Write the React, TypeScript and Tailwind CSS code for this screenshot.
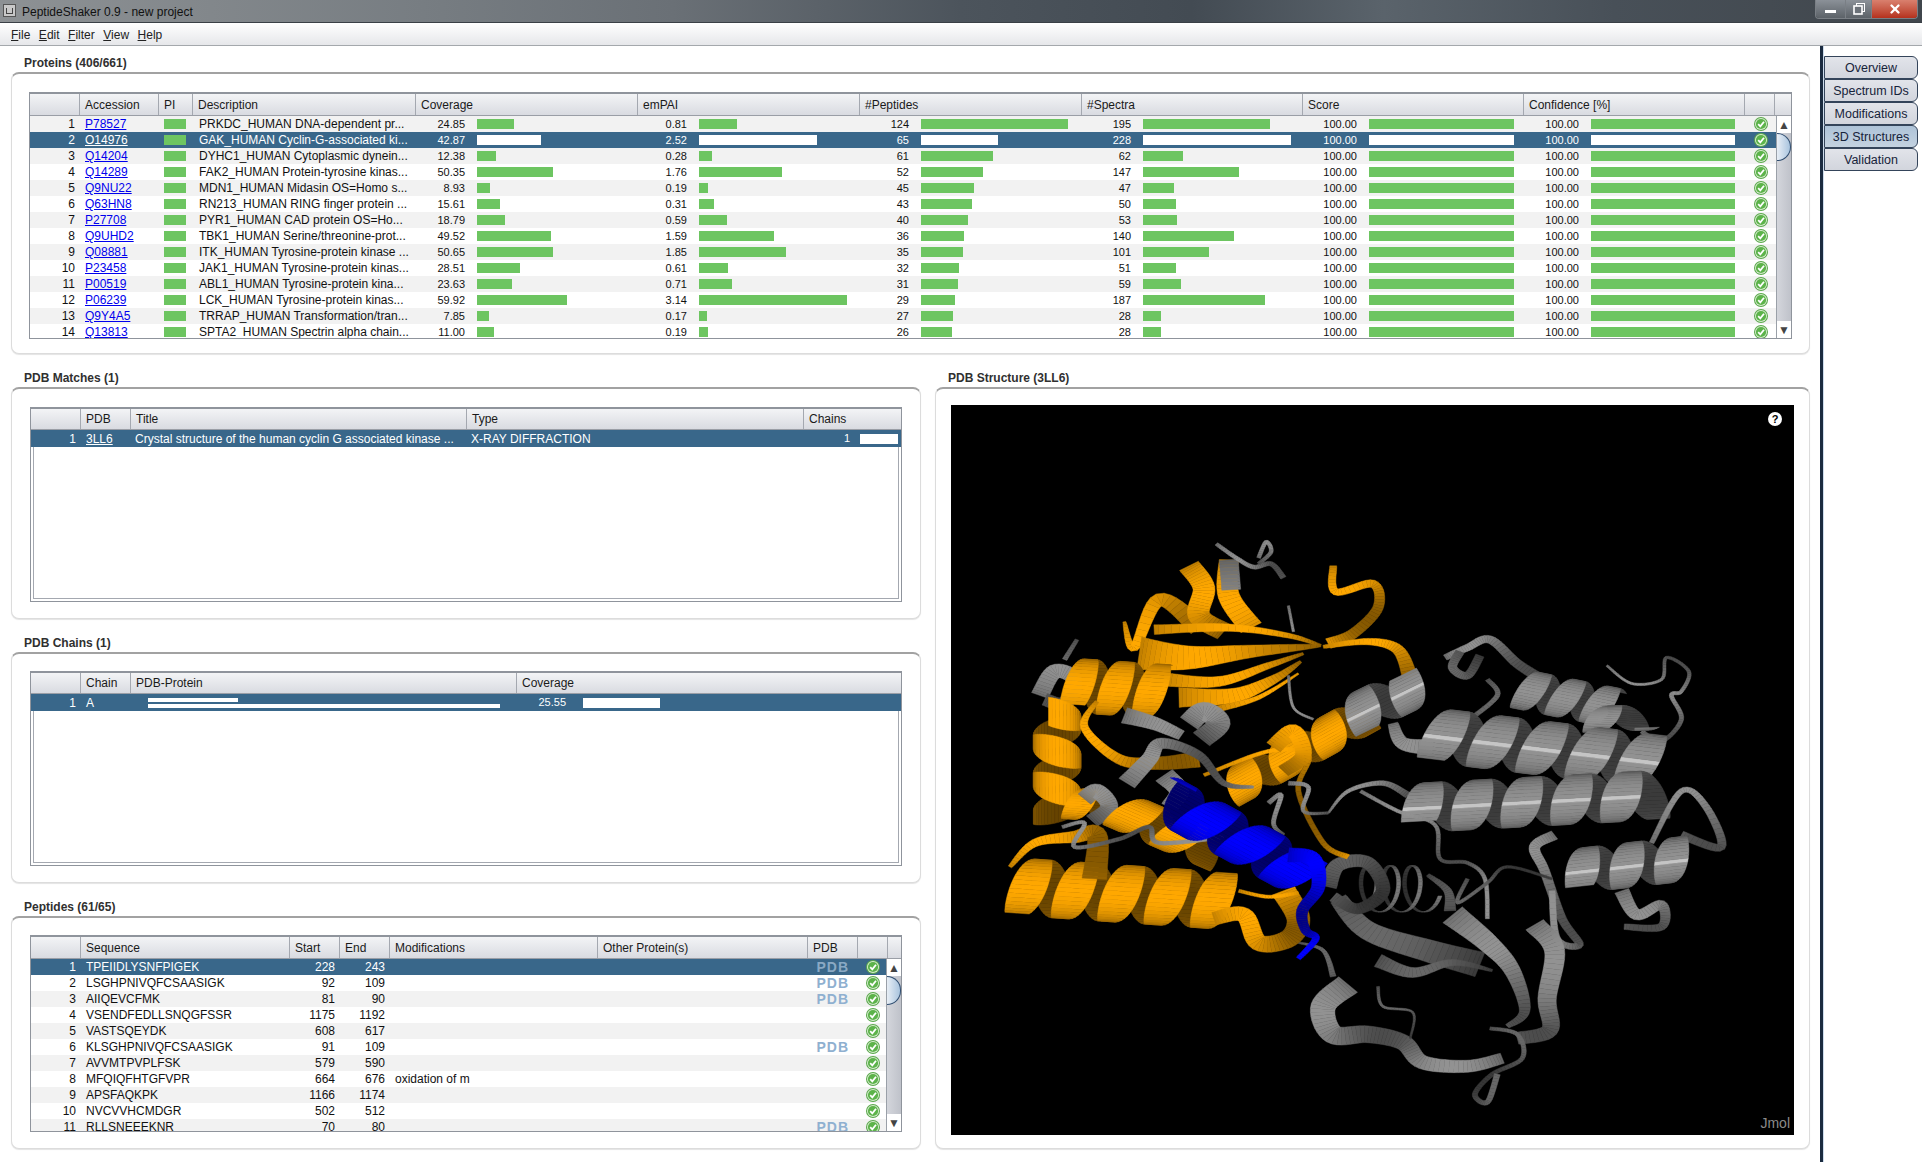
import { X } from "lucide-react";

type Rgb = [number, number, number];
type Poly = { p: string; f: string };

const ORANGE: Rgb = [255, 168, 0];
const GRAY: Rgb = [146, 146, 146];
const DARK: Rgb = [104, 104, 104];
const BLUE: Rgb = [0, 0, 255];

const tint = (c: Rgb, s: number) =>
  `rgb(${Math.min(255, Math.round(c[0] * s))},${Math.min(255, Math.round(c[1] * s))},${Math.min(255, Math.round(c[2] * s))})`;

// helical ribbon between two points, back half first so the front covers it.
// the band pinches at the turns, which gives the scalloped outline Jmol draws
function helix(ax: number, ay: number, bx: number, by: number, r: number, turns: number, w: number, base: Rgb, phase = 0, ell = 0): Poly[] {
  const len = Math.hypot(bx - ax, by - ay);
  const ux = (bx - ax) / len;
  const uy = (by - ay) / len;
  const nx = -uy;
  const ny = ux;
  const steps = Math.round(turns * 40);
  const back: Poly[] = [];
  const front: Poly[] = [];
  const at = (t: number) => {
    const th = Math.PI * 2 * turns * t + phase;
    const c = Math.cos(th) * r;
    const s = Math.sin(th) * ell;
    return [ax + (bx - ax) * t + nx * c + ux * s, ay + (by - ay) * t + ny * c + uy * s];
  };
  const half = (t: number) => {
    const th = Math.PI * 2 * turns * t + phase;
    return (w / 2) * (ell > 0 ? 1 : 0.45 + 0.55 * Math.abs(Math.sin(th)));
  };
  for (let i = 0; i < steps; i++) {
    const t0 = i / steps;
    const t1 = (i + 1) / steps;
    const a = at(t0);
    const b = at(t1);
    const h0 = half(t0);
    const h1 = half(t1);
    const th = Math.PI * 2 * turns * ((t0 + t1) / 2) + phase;
    const sn = Math.sin(th);
    const p = [
      [a[0] - ux * h0, a[1] - uy * h0],
      [b[0] - ux * h1, b[1] - uy * h1],
      [b[0] + ux * h1, b[1] + uy * h1],
      [a[0] + ux * h0, a[1] + uy * h0],
    ]
      .map((q) => q.map((v) => v.toFixed(1)).join(","))
      .join(" ");
    if (sn > 0) front.push({ p, f: tint(base, sn > 0.997 && base !== BLUE && base !== ORANGE ? 1.35 : 0.58 + 0.42 * sn) });
    else back.push({ p, f: tint(base, 0.54 + 0.14 * sn) });
  }
  return [...back, ...front];
}

// smooth band through a list of points, used for sheets and coils
function band(pts: number[][], w0: number, w1: number, base: Rgb, sheen = 0.14): Poly[] {
  const out: Poly[] = [];
  const sampled: number[][] = [];
  for (let i = 0; i < pts.length - 1; i++) {
    const p0 = pts[Math.max(0, i - 1)];
    const p1 = pts[i];
    const p2 = pts[i + 1];
    const p3 = pts[Math.min(pts.length - 1, i + 2)];
    for (let k = 0; k < 10; k++) {
      const t = k / 10;
      const f = (a: number, b: number, c: number, d: number) =>
        0.5 * (2 * b + (c - a) * t + (2 * a - 5 * b + 4 * c - d) * t * t + (3 * b - a - 3 * c + d) * t * t * t);
      sampled.push([f(p0[0], p1[0], p2[0], p3[0]), f(p0[1], p1[1], p2[1], p3[1])]);
    }
  }
  sampled.push(pts[pts.length - 1]);
  const edge = (i: number) => {
    const a = sampled[Math.max(0, i - 1)];
    const b = sampled[Math.min(sampled.length - 1, i + 1)];
    const l = Math.hypot(b[0] - a[0], b[1] - a[1]) || 1;
    const w = (w0 + (w1 - w0) * (i / (sampled.length - 1))) / 2;
    const nx = (-(b[1] - a[1]) / l) * w;
    const ny = ((b[0] - a[0]) / l) * w;
    const c = sampled[i];
    return [`${(c[0] + nx).toFixed(1)},${(c[1] + ny).toFixed(1)}`, `${(c[0] - nx).toFixed(1)},${(c[1] - ny).toFixed(1)}`];
  };
  for (let i = 0; i < sampled.length - 1; i++) {
    const e0 = edge(i);
    const e1 = edge(i + 1);
    const s = 0.76 + 0.24 * Math.sin(i * sheen);
    out.push({ p: `${e0[0]} ${e1[0]} ${e1[1]} ${e0[1]}`, f: tint(base, s) });
  }
  return out;
}

const ribbons: Poly[] = [
  // grey domain, far side
  ...band([[915, 345], [960, 320], [1005, 300], [1060, 360], [1110, 400]], 14, 24, GRAY),
  ...band([[1000, 400], [1020, 440], [965, 500]], 10, 10, DARK),
  ...band([[945, 330], [930, 370], [960, 390], [985, 340]], 18, 18, DARK),
  ...helix(1070, 425, 1250, 470, 50, 2.6, 54, GRAY),
  ...band([[1240, 365], [1290, 410], [1350, 400], [1360, 345], [1405, 380], [1390, 430], [1370, 440], [1390, 500], [1350, 555], [1310, 530]], 5, 10, GRAY),
  ...helix(1205, 500, 1320, 495, 32, 1.1, 64, GRAY),
  ...band([[810, 510], [830, 560], [890, 570]], 20, 40, GRAY),
  ...helix(895, 540, 1330, 605, 68, 4.4, 78, GRAY, 0.5),
  ...band([[680, 735], [720, 680], [790, 660], [840, 690]], 4, 16, GRAY),
  ...helix(860, 722, 1340, 690, 62, 4.8, 78, GRAY, 1),
  ...band([[745, 680], [820, 730], [895, 765], [905, 850], [960, 860], [995, 900], [1000, 1000]], 8, 8, GRAY),
  ...band([[1135, 790], [1095, 820], [1115, 880], [1150, 1000], [1185, 1065], [1140, 1050], [1130, 930]], 24, 12, GRAY),
  ...band([[1330, 810], [1390, 680], [1440, 720], [1470, 820], [1390, 790]], 10, 20, GRAY),
  ...helix(1180, 880, 1395, 850, 56, 2.4, 68, GRAY, 0.8),
  ...band([[1270, 930], [1300, 990], [1350, 965], [1350, 1020], [1275, 1020]], 30, 14, GRAY),
  // lower lobe
  ...band([[700, 950], [760, 1030], [880, 1080], [985, 1115]], 36, 64, DARK),
  ...band([[930, 990], [1000, 1060], [1050, 1130], [1075, 1230], [1040, 1270]], 56, 10, GRAY),
  ...band([[1095, 1015], [1135, 1080], [1120, 1200], [1125, 1280], [1060, 1300]], 44, 30, GRAY),
  ...band([[780, 1105], [850, 1135], [930, 1110], [1010, 1130]], 34, 6, DARK),
  ...band([[720, 1165], [670, 1220], [690, 1290], [760, 1290], [830, 1310], [870, 1360], [960, 1370], [1030, 1350]], 54, 26, GRAY),
  ...band([[780, 1170], [790, 1220], [850, 1235], [845, 1300]], 6, 4, DARK),
  ...band([[1005, 1275], [1060, 1290], [1070, 1350], [1010, 1390], [975, 1440], [1000, 1460], [1020, 1390]], 8, 12, DARK),
  ...band([[620, 1060], [670, 1080], [690, 1145]], 4, 12, DARK),
  ...band([[960, 900], [940, 960], [1000, 910], [1040, 870], [1130, 900]], 8, 6, DARK),
  // dark helix seen along its axis
  ...helix(740, 925, 880, 925, 58, 3.2, 8, [120, 120, 120], 0, 26),
  ...band([[680, 920], [700, 865], [760, 860], [790, 930], [740, 975], [690, 945]], 34, 24, [96, 96, 96]),
  ...band([[880, 890], [920, 930], [925, 980]], 8, 24, [90, 90, 90]),
  // orange domain
  ...band([[270, 255], [290, 320], [340, 200], [420, 270]], 6, 44, ORANGE),
  ...band([[400, 115], [430, 170], [420, 240], [470, 280]], 44, 44, ORANGE),
  ...band([[480, 100], [480, 190], [525, 270]], 38, 48, ORANGE),
  ...band([[480, 100], [485, 175]], 38, 38, [130, 130, 130]),
  ...band([[455, 60], [495, 95], [530, 118], [565, 110], [590, 145]], 8, 12, GRAY),
  ...band([[540, 95], [555, 55], [565, 80], [540, 110]], 8, 8, GRAY),
  ...band([[690, 115], [695, 180], [770, 160], [780, 220], [730, 285], [680, 310]], 14, 26, ORANGE),
  ...band([[600, 215], [610, 280]], 5, 5, GRAY),
  ...band([[300, 335], [400, 345], [520, 330], [665, 315]], 84, 6, ORANGE),
  ...band([[330, 275], [480, 270], [600, 290], [665, 315]], 24, 6, ORANGE),
  ...band([[350, 400], [460, 405], [560, 365], [630, 335]], 34, 6, ORANGE),
  ...band([[380, 445], [490, 440], [570, 400], [625, 355]], 50, 6, ORANGE),
  ...band([[455, 475], [540, 445], [620, 385]], 16, 4, ORANGE),
  ...band([[600, 390], [610, 470], [650, 500]], 5, 5, GRAY),
  ...band([[670, 318], [760, 305], [820, 325], [845, 395]], 8, 32, ORANGE),
  ...band([[100, 440], [130, 380], [170, 400], [150, 460], [110, 450]], 36, 30, GRAY),
  ...helix(170, 415, 345, 430, 68, 2.4, 60, ORANGE, 0.8),
  ...band([[270, 490], [330, 510], [385, 540]], 40, 24, GRAY),
  ...band([[400, 510], [430, 480], [460, 510], [425, 550]], 46, 46, GRAY),
  ...helix(135, 480, 135, 745, 48, 2.8, 74, ORANGE, 1.2),
  ...band([[215, 455], [190, 520], [260, 600], [340, 610], [420, 600]], 8, 40, ORANGE),
  ...helix(490, 670, 745, 495, 46, 3, 78, ORANGE),
  ...helix(735, 490, 850, 420, 52, 1.3, 76, GRAY, 0.5),
  ...helix(160, 710, 250, 720, 40, 1.1, 54, ORANGE),
  ...band([[190, 700], [215, 680], [240, 720], [205, 755]], 36, 34, GRAY),
  ...helix(265, 730, 450, 830, 48, 2, 76, ORANGE),
  ...band([[430, 640], [560, 580], [640, 590], [620, 680], [670, 810], [720, 845]], 8, 12, ORANGE),
  ...band([[570, 570], [610, 530], [630, 590], [590, 630]], 36, 30, ORANGE),
  ...helix(60, 920, 470, 955, 72, 4.4, 74, ORANGE, 0.4),
  ...band([[40, 870], [90, 810], [170, 795], [215, 790], [210, 900]], 8, 50, ORANGE),
  ...band([[450, 1000], [510, 990], [540, 1060], [600, 1050], [620, 1000], [590, 930]], 32, 50, ORANGE),
  ...band([[500, 930], [560, 945], [620, 935]], 8, 8, ORANGE),
  // grey loops over the orange
  ...band([[275, 660], [320, 600], [345, 560], [420, 590], [470, 660], [530, 670]], 40, 6, GRAY),
  ...band([[350, 640], [380, 680], [360, 720]], 44, 34, GRAY),
  ...band([[145, 770], [190, 760], [170, 820], [260, 800], [320, 770], [340, 810], [470, 795]], 8, 10, GRAY),
  ...band([[560, 710], [585, 690], [570, 760], [590, 790]], 10, 8, GRAY),
  ...band([[600, 660], [640, 670], [630, 730], [680, 735]], 10, 6, GRAY),
  ...band([[175, 300], [150, 350]], 8, 10, DARK),
  // blue stretch
  ...helix(360, 705, 625, 885, 58, 3, 84, BLUE, 2.6),
  ...band([[600, 840], [650, 850], [660, 920], [628, 980], [635, 1030], [655, 1050], [620, 1100]], 36, 10, BLUE),
];

const proteins = [
  ["P78527", "PRKDC_HUMAN DNA-dependent pr...", "24.85", "0.81", 124, 195],
  ["O14976", "GAK_HUMAN Cyclin-G-associated ki...", "42.87", "2.52", 65, 228],
  ["Q14204", "DYHC1_HUMAN Cytoplasmic dynein...", "12.38", "0.28", 61, 62],
  ["Q14289", "FAK2_HUMAN Protein-tyrosine kinas...", "50.35", "1.76", 52, 147],
  ["Q9NU22", "MDN1_HUMAN Midasin OS=Homo s...", "8.93", "0.19", 45, 47],
  ["Q63HN8", "RN213_HUMAN RING finger protein ...", "15.61", "0.31", 43, 50],
  ["P27708", "PYR1_HUMAN CAD protein OS=Ho...", "18.79", "0.59", 40, 53],
  ["Q9UHD2", "TBK1_HUMAN Serine/threonine-prot...", "49.52", "1.59", 36, 140],
  ["Q08881", "ITK_HUMAN Tyrosine-protein kinase ...", "50.65", "1.85", 35, 101],
  ["P23458", "JAK1_HUMAN Tyrosine-protein kinas...", "28.51", "0.61", 32, 51],
  ["P00519", "ABL1_HUMAN Tyrosine-protein kina...", "23.63", "0.71", 31, 59],
  ["P06239", "LCK_HUMAN Tyrosine-protein kinas...", "59.92", "3.14", 29, 187],
  ["Q9Y4A5", "TRRAP_HUMAN Transformation/tran...", "7.85", "0.17", 27, 28],
  ["Q13813", "SPTA2_HUMAN Spectrin alpha chain...", "11.00", "0.19", 26, 28],
] as const;

const peptides = [
  ["TPEIIDLYSNFPIGEK", 228, 243, "", true],
  ["LSGHPNIVQFCSAASIGK", 92, 109, "", true],
  ["AIIQEVCFMK", 81, 90, "", true],
  ["VSENDFEDLLSNQGFSSR", 1175, 1192, "", false],
  ["VASTSQEYDK", 608, 617, "", false],
  ["KLSGHPNIVQFCSAASIGK", 91, 109, "", true],
  ["AVVMTPVPLFSK", 579, 590, "", false],
  ["MFQIQFHTGFVPR", 664, 676, "oxidation of m", false],
  ["APSFAQKPK", 1166, 1174, "", false],
  ["NVCVVHCMDGR", 502, 512, "", false],
  ["RLLSNEEEKNR", 70, 80, "", true],
] as const;

const menus = ["File", "Edit", "Filter", "View", "Help"];
const tabs = ["Overview", "Spectrum IDs", "Modifications", "3D Structures", "Validation"];

function Check() {
  return (
    <svg width="14" height="14" viewBox="0 0 14 14" className="shrink-0">
      <circle cx="7" cy="7" r="7" fill="#5aa84c" />
      <circle cx="7" cy="7" r="6" fill="#d8ecd0" />
      <circle cx="7" cy="7" r="5.1" fill="#5cb34a" />
      <path d="M4.2 7.2 L6.3 9.3 L10 4.8" fill="none" stroke="#ffffff" strokeWidth="1.8" />
    </svg>
  );
}

function Bar({ width, selected }: { width: number; selected: boolean }) {
  return <div className={`h-[10px] ${selected ? "bg-white" : "bg-[#6dc561]"}`} style={{ width }} />;
}

function HeaderCell({ className, children }: { className: string; children?: React.ReactNode }) {
  return (
    <div className={`flex h-full items-center border-r border-[#a4a8b0] pl-[5px] ${className}`}>{children}</div>
  );
}

function TableHeader({ height, children }: { height: string; children: React.ReactNode }) {
  return (
    <div className={`flex shrink-0 border-b border-[#9a9ea6] bg-gradient-to-b from-[#f3f4f6] to-[#d9dbe1] text-[12px] text-[#1a1a1a] ${height}`}>
      {children}
    </div>
  );
}

function Scrollbar({ thumb }: { thumb: string }) {
  return (
    <div className="flex w-[15px] shrink-0 flex-col items-center border-l border-[#9aa0a8] bg-gradient-to-r from-[#d4d6dc] to-[#bfc2ca]">
      <div className="flex h-[17px] w-full shrink-0 items-center justify-center bg-white text-[12px] leading-none text-[#444]">▲</div>
      <div className={`w-full shrink-0 rounded-r-[14px] border border-l-0 border-[#2f4d70] bg-gradient-to-r from-[#e8eef5] to-[#a9c4de] ${thumb}`} />
      <div className="flex-1" />
      <div className="flex h-[17px] w-full shrink-0 items-center justify-center bg-white text-[12px] leading-none text-[#444]">▼</div>
    </div>
  );
}

function Panel({ title, className, inner, children }: { title: string; className: string; inner: string; children: React.ReactNode }) {
  return (
    <section className={`flex flex-col ${className}`}>
      <h2 className="h-[18px] shrink-0 pl-[13px] pt-[2px] text-[12px] font-bold leading-[14px] text-[#303030]">{title}</h2>
      <div className={`flex min-h-0 flex-1 flex-col rounded-[8px] border border-[#dcdcdc] border-t-2 border-t-[#a2a2a2] bg-white shadow-[0_1px_1px_#e4e4e4] ${inner}`}>
        {children}
      </div>
    </section>
  );
}

function ProteinsTable() {
  return (
    <div className="flex h-[247px] flex-col border border-[#8f949c] border-t-2 bg-white">
      <TableHeader height="h-[22px]">
        <HeaderCell className="w-[50px]" />
        <HeaderCell className="w-[79px]">Accession</HeaderCell>
        <HeaderCell className="w-[34px]">PI</HeaderCell>
        <HeaderCell className="w-[223px]">Description</HeaderCell>
        <HeaderCell className="w-[222px]">Coverage</HeaderCell>
        <HeaderCell className="w-[222px]">emPAI</HeaderCell>
        <HeaderCell className="w-[222px]">#Peptides</HeaderCell>
        <HeaderCell className="w-[221px]">#Spectra</HeaderCell>
        <HeaderCell className="w-[221px]">Score</HeaderCell>
        <HeaderCell className="w-[221px]">Confidence [%]</HeaderCell>
        <HeaderCell className="w-[30px]" />
        <div className="flex-1" />
      </TableHeader>
      <div className="flex min-h-0 flex-1">
        <div className="min-w-0 flex-1 overflow-hidden">
          {proteins.map((row, i) => {
            const selected = i === 1;
            const bg = selected ? "bg-[#39678a] text-white" : i % 2 === 0 ? "bg-[#f2f2f2] text-[#111]" : "bg-white text-[#111]";
            const num = "text-right text-[11px]";
            return (
              <div key={row[0]} className={`flex h-[16px] items-center text-[12px] leading-[16px] ${bg}`}>
                <div className="w-[45px] shrink-0 text-right">{i + 1}</div>
                <div className={`ml-[10px] w-[74px] shrink-0 underline ${selected ? "text-white" : "text-[#0000ee]"}`}>{row[0]}</div>
                <div className="w-[34px] shrink-0 pl-[5px]">
                  <div className="h-[10px] w-[22px] bg-[#6dc561]" />
                </div>
                <div className="w-[223px] shrink-0 whitespace-nowrap pl-[6px]">{row[1]}</div>
                <div className="flex w-[222px] shrink-0 items-center">
                  <div className={`w-[49px] ${num}`}>{row[2]}</div>
                  <div className="ml-[12px]">
                    <Bar selected={selected} width={Number(row[2]) * 1.5} />
                  </div>
                </div>
                <div className="flex w-[222px] shrink-0 items-center">
                  <div className={`w-[49px] ${num}`}>{row[3]}</div>
                  <div className="ml-[12px]">
                    <Bar selected={selected} width={Number(row[3]) * 47} />
                  </div>
                </div>
                <div className="flex w-[222px] shrink-0 items-center">
                  <div className={`w-[49px] ${num}`}>{row[4]}</div>
                  <div className="ml-[12px]">
                    <Bar selected={selected} width={row[4] * 1.186} />
                  </div>
                </div>
                <div className="flex w-[220px] shrink-0 items-center">
                  <div className={`w-[49px] ${num}`}>{row[5]}</div>
                  <div className="ml-[12px]">
                    <Bar selected={selected} width={row[5] * 0.65} />
                  </div>
                </div>
                <div className="flex w-[222px] shrink-0 items-center">
                  <div className={`w-[55px] ${num}`}>100.00</div>
                  <div className="ml-[12px]">
                    <Bar selected={selected} width={145} />
                  </div>
                </div>
                <div className="flex w-[221px] shrink-0 items-center">
                  <div className={`w-[55px] ${num}`}>100.00</div>
                  <div className="ml-[12px]">
                    <Bar selected={selected} width={144} />
                  </div>
                </div>
                <div className="flex w-[30px] shrink-0 justify-center pl-[2px]">
                  <Check />
                </div>
              </div>
            );
          })}
        </div>
        <Scrollbar thumb="h-[28px]" />
      </div>
    </div>
  );
}

function EmptyArea() {
  return <div className="mx-[2px] mb-[2px] min-h-0 flex-1 border border-t-0 border-[#a4a8b0]" />;
}

function MatchesTable() {
  return (
    <div className="flex h-[195px] flex-col border border-[#8f949c] border-t-2 bg-white">
      <TableHeader height="h-[21px]">
        <HeaderCell className="w-[50px]" />
        <HeaderCell className="w-[50px]">PDB</HeaderCell>
        <HeaderCell className="w-[336px]">Title</HeaderCell>
        <HeaderCell className="w-[337px]">Type</HeaderCell>
        <div className="flex h-full flex-1 items-center pl-[5px]">Chains</div>
      </TableHeader>
      <div className="flex h-[17px] shrink-0 items-center bg-[#39678a] text-[12px] text-white">
        <div className="w-[45px] text-right">1</div>
        <div className="ml-[10px] w-[45px] underline">3LL6</div>
        <div className="w-[336px] whitespace-nowrap pl-[4px]">Crystal structure of the human cyclin G associated kinase ...</div>
        <div className="w-[337px] pl-[4px]">X-RAY DIFFRACTION</div>
        <div className="flex flex-1 items-center">
          <div className="ml-[40px] text-[11px]">1</div>
          <div className="ml-[10px] h-[10px] w-[38px] bg-white" />
        </div>
      </div>
      <EmptyArea />
    </div>
  );
}

function ChainsTable() {
  return (
    <div className="flex h-[195px] flex-col border border-[#8f949c] border-t-2 bg-white">
      <TableHeader height="h-[21px]">
        <HeaderCell className="w-[50px]" />
        <HeaderCell className="w-[50px]">Chain</HeaderCell>
        <HeaderCell className="w-[386px]">PDB-Protein</HeaderCell>
        <div className="flex h-full flex-1 items-center pl-[5px]">Coverage</div>
      </TableHeader>
      <div className="flex h-[17px] shrink-0 items-center bg-[#39678a] text-[12px] text-white">
        <div className="w-[45px] text-right">1</div>
        <div className="ml-[10px] w-[45px]">A</div>
        <div className="flex w-[386px] flex-col gap-[2px] pl-[17px]">
          <div className="h-[4px] w-[90px] bg-white" />
          <div className="h-[4px] w-[352px] bg-white" />
        </div>
        <div className="w-[49px] text-right text-[11px]">25.55</div>
        <div className="ml-[17px] h-[10px] w-[77px] bg-white" />
      </div>
      <EmptyArea />
    </div>
  );
}

function PdbMark({ selected }: { selected: boolean }) {
  return (
    <span className={`text-[14px] font-bold leading-none tracking-[1px] ${selected ? "text-[#8aa9c4]" : "text-[#8fb0d0]"}`}>PDB</span>
  );
}

function PeptidesTable() {
  return (
    <div className="flex h-[197px] flex-col border border-[#8f949c] border-t-2 bg-white">
      <TableHeader height="h-[22px]">
        <HeaderCell className="w-[50px]" />
        <HeaderCell className="w-[209px]">Sequence</HeaderCell>
        <HeaderCell className="w-[50px]">Start</HeaderCell>
        <HeaderCell className="w-[50px]">End</HeaderCell>
        <HeaderCell className="w-[208px]">Modifications</HeaderCell>
        <HeaderCell className="w-[210px]">Other Protein(s)</HeaderCell>
        <HeaderCell className="w-[50px]">PDB</HeaderCell>
        <HeaderCell className="w-[30px]" />
        <div className="flex-1" />
      </TableHeader>
      <div className="flex min-h-0 flex-1">
        <div className="min-w-0 flex-1 overflow-hidden">
          {peptides.map((row, i) => {
            const selected = i === 0;
            const bg = selected ? "bg-[#39678a] text-white" : i % 2 === 0 ? "bg-[#f2f2f2] text-[#111]" : "bg-white text-[#111]";
            return (
              <div key={row[0]} className={`flex h-[16px] items-center text-[12px] leading-[16px] ${bg}`}>
                <div className="w-[45px] shrink-0 text-right">{i + 1}</div>
                <div className="ml-[10px] w-[204px] shrink-0">{row[0]}</div>
                <div className="w-[50px] shrink-0 pr-[5px] text-right">{row[1]}</div>
                <div className="w-[50px] shrink-0 pr-[5px] text-right">{row[2]}</div>
                <div className="w-[208px] shrink-0 pl-[5px]">{row[3]}</div>
                <div className="w-[210px] shrink-0" />
                <div className="flex w-[50px] shrink-0 justify-end pr-[9px]">{row[4] && <PdbMark selected={selected} />}</div>
                <div className="flex w-[30px] shrink-0 justify-center">
                  <Check />
                </div>
              </div>
            );
          })}
        </div>
        <Scrollbar thumb="h-[29px]" />
      </div>
    </div>
  );
}

function Structure() {
  return (
    <div className="relative min-h-0 flex-1 overflow-hidden bg-black">
      <svg viewBox="0 0 843 730" className="block h-full w-full">
        <g transform="translate(39,115) scale(0.4974,0.3987)">
          {ribbons.map((r, i) => (
            <polygon key={i} points={r.p} fill={r.f} stroke={r.f} strokeWidth="1" />
          ))}
        </g>
      </svg>
      <div className="absolute right-[12px] top-[7px] flex h-[14px] w-[14px] items-center justify-center rounded-full bg-white text-[11px] font-bold leading-none text-black">?</div>
      <div className="absolute bottom-[1px] right-[4px] text-[14px] text-[#8a8a8a]">Jmol</div>
    </div>
  );
}

export default function App() {
  return (
    <div className="flex h-[1162px] w-[1922px] flex-col overflow-hidden bg-white font-['Liberation_Sans',sans-serif]">
      {/* Title bar */}
      <div className="flex h-[23px] shrink-0 items-start border-b border-[#3a4046] bg-[linear-gradient(90deg,#8d9194_0%,#777d82_22%,#6a7076_35%,#4c545c_50%,#434b53_62%,#5a636b_72%,#485058_84%,#40464c_100%)] pl-[3px]">
        <div className="mt-[4px] flex h-[13px] w-[13px] items-center justify-center border border-[#555] bg-[#c8c8c8]">
          <div className="h-[6px] w-[7px] border-x border-b border-[#444]" />
        </div>
        <div className="ml-[6px] mt-[4px] text-[12px] leading-[16px] text-[#111]">PeptideShaker 0.9 - new project</div>
        <div className="flex-1" />
        <div className="mr-[4px] flex h-[19px] w-[103px] overflow-hidden rounded-b-[4px] border border-t-0 border-[#7a7f85]">
          <div className="flex w-[29px] items-center justify-center bg-gradient-to-b from-[#8b9198] to-[#5d6369]">
            <div className="mt-[5px] h-[3px] w-[11px] bg-white" />
          </div>
          <div className="flex w-[27px] items-center justify-center border-x border-[#7a7f85] bg-gradient-to-b from-[#8b9198] to-[#5d6369]">
            <svg width="12" height="12" viewBox="0 0 12 12">
              <rect x="3.5" y="0.5" width="8" height="8" fill="none" stroke="#ffffff" />
              <rect x="1" y="3" width="8" height="8" fill="#6b7178" stroke="#ffffff" strokeWidth="1.6" />
            </svg>
          </div>
          <div className="flex flex-1 items-center justify-center bg-gradient-to-b from-[#d9806e] to-[#b5301c]">
            <X size={14} strokeWidth={4} className="text-white" />
          </div>
        </div>
      </div>

      {/* Menu bar */}
      <div className="flex h-[23px] shrink-0 items-center gap-[8.5px] border-b border-[#a4a8ac] bg-gradient-to-b from-white to-[#e6e7ea] pl-[11px] pt-[2px] text-[12px] text-[#222]">
        {menus.map((m) => (
          <span key={m}>
            <span className="underline">{m[0]}</span>
            {m.slice(1)}
          </span>
        ))}
      </div>

      <div className="flex min-h-0 flex-1">
        {/* Main area */}
        <main className="flex w-[1820px] shrink-0 flex-col pl-[11px] pr-[10px] pt-[8px]">
          <Panel title="Proteins (406/661)" className="h-[300px]" inner="pl-[17px] pr-[17px] pt-[18px]">
            <ProteinsTable />
          </Panel>
          <div className="mt-[15px] grid h-[780px] grid-cols-[910px_875px] gap-x-[14px]">
            <div className="flex flex-col gap-[15px]">
              <Panel title="PDB Matches (1)" className="h-[250px]" inner="pl-[18px] pr-[18px] pt-[18px]">
                <MatchesTable />
              </Panel>
              <Panel title="PDB Chains (1)" className="h-[249px]" inner="pl-[18px] pr-[18px] pt-[17px]">
                <ChainsTable />
              </Panel>
              <Panel title="Peptides (61/65)" className="h-[251px]" inner="pl-[18px] pr-[18px] pt-[17px]">
                <PeptidesTable />
              </Panel>
            </div>
            <Panel title="PDB Structure (3LL6)" className="h-[780px]" inner="pb-[13px] pl-[15px] pr-[15px] pt-[16px]">
              <Structure />
            </Panel>
          </div>
        </main>

        {/* Separator */}
        <div className="w-[3px] shrink-0 bg-[#1b2b40]" />
        <div className="w-[1px] shrink-0 bg-[#cddcec]" />

        {/* Tabs */}
        <nav className="flex flex-1 flex-col pt-[10px] pr-[4px]">
          {tabs.map((t) => (
            <div
              key={t}
              className={`flex h-[23px] items-center justify-center rounded-r-[6px] border border-[#34445a] pt-[1px] text-[12.5px] text-[#16233a] ${
                t === "3D Structures"
                  ? "bg-gradient-to-b from-[#aec3d8] to-[#c4d2e0]"
                  : "bg-gradient-to-b from-[#e2e4ea] to-[#d2d5dd]"
              }`}
            >
              {t}
            </div>
          ))}
        </nav>
      </div>
    </div>
  );
}
